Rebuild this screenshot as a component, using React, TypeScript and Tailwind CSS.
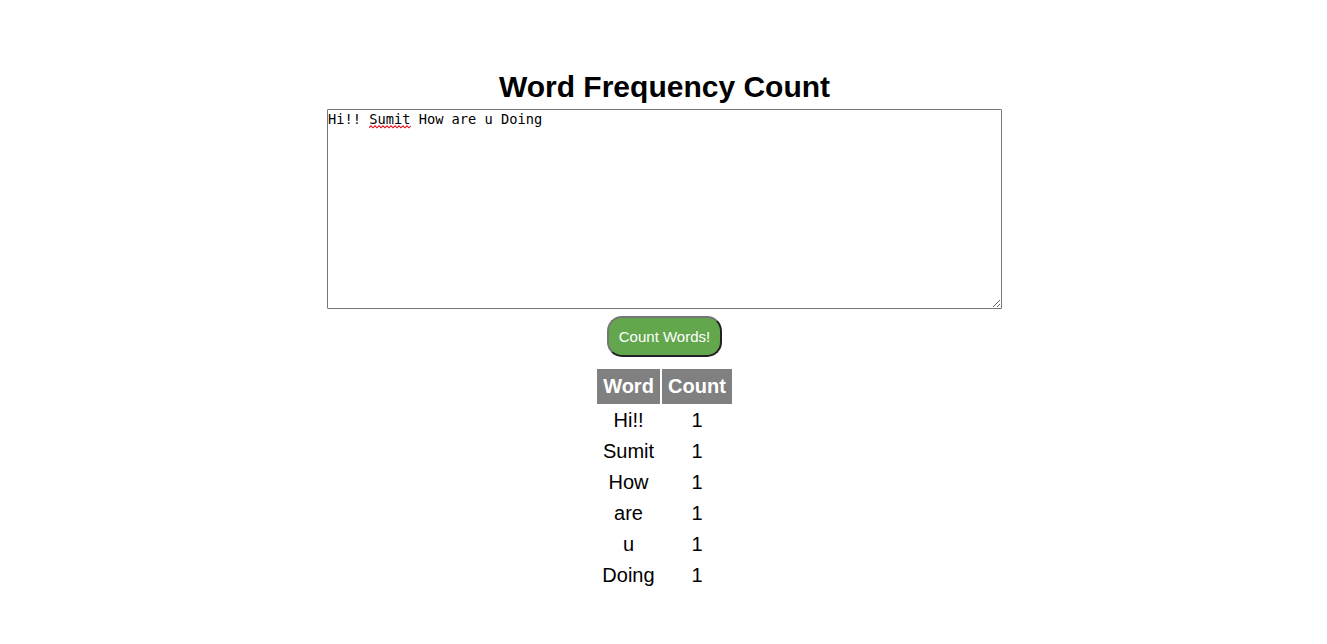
import { useState } from "react";

function countWords(text: string): [string, number][] {
  const counts = new Map<string, number>();
  for (const word of text.split(/\s+/).filter(Boolean)) {
    counts.set(word, (counts.get(word) ?? 0) + 1);
  }
  return [...counts];
}

const INITIAL_TEXT = "Hi!! Sumit How are u Doing";

export default function App() {
  const [text, setText] = useState(INITIAL_TEXT);
  const [rows, setRows] = useState(countWords(INITIAL_TEXT));

  return (
    <main className="flex min-h-screen flex-col items-center bg-white pt-[69px] pl-0.5 font-['Liberation_Sans',Arial,sans-serif] text-black">
      <h1 className="h-10 text-[30px] leading-[35px] font-bold whitespace-nowrap">Word Frequency Count</h1>

      <div className="relative h-[200px] w-[675px]">
        <textarea
          spellCheck={false}
          value={text}
          onChange={(e) => setText(e.target.value)}
          className="block h-[200px] w-[675px] resize rounded-[1px] border border-[#767676] bg-white font-['DejaVu_Sans_Mono',monospace] text-[13.7px] leading-[18px] outline-none"
        />
        {text === INITIAL_TEXT && (
          <svg className="pointer-events-none absolute top-4 left-[42px]" width="42" height="4" viewBox="0 0 42 4" fill="none">
            <path
              d="M0 2.8L2 .8L4 2.8L6 .8L8 2.8L10 .8L12 2.8L14 .8L16 2.8L18 .8L20 2.8L22 .8L24 2.8L26 .8L28 2.8L30 .8L32 2.8L34 .8L36 2.8L38 .8L40 2.8L42 .8"
              stroke="#e51c23"
              strokeWidth="1.1"
            />
          </svg>
        )}
      </div>

      <button
        onClick={() => setRows(countWords(text))}
        className="mt-[7px] h-[41px] w-[115px] rounded-[15px] border-2 border-t-[#767676] border-r-[#212121] border-b-[#212121] border-l-[#767676] bg-[#62a74c] text-[15px] leading-[17px] whitespace-nowrap text-white"
      >
        Count Words!
      </button>

      <table className="mt-2.5 border-separate border-spacing-0.5 text-center text-xl leading-[23px]">
        <thead>
          <tr className="bg-[#808080] text-white">
            <th className="h-[35px] w-[63px] p-0 font-bold">Word</th>
            <th className="h-[35px] w-[70px] p-0 font-bold">Count</th>
          </tr>
        </thead>
        <tbody>
          {rows.map(([word, count]) => (
            <tr key={word}>
              <td className="p-[3px]">{word}</td>
              <td className="p-[3px]">{count}</td>
            </tr>
          ))}
        </tbody>
      </table>
    </main>
  );
}
